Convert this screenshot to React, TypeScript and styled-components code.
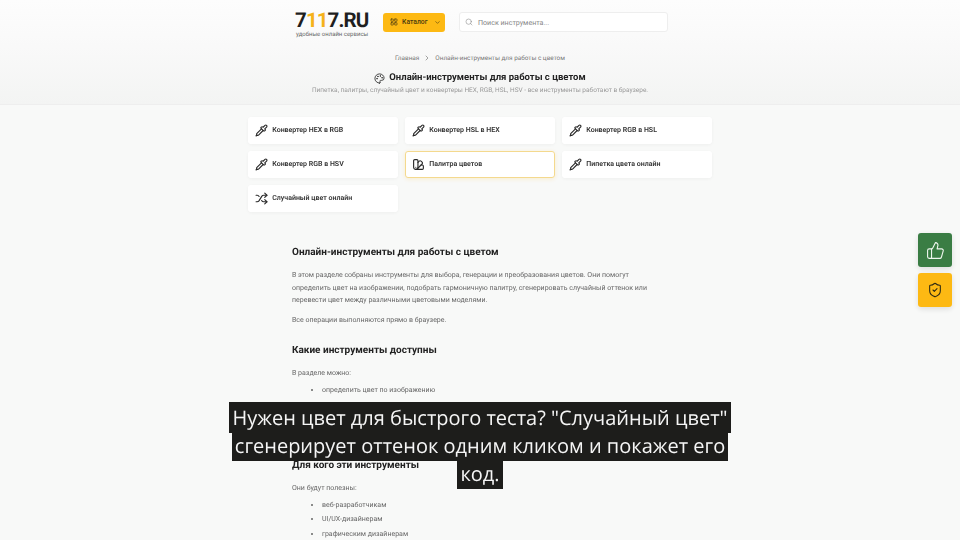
import React from 'react';
import styled, { createGlobalStyle } from 'styled-components';
import {
  ChevronDown,
  ChevronRight,
  LayoutGrid,
  Palette,
  Pipette,
  Search,
  ShieldCheck,
  Shuffle,
  SwatchBook,
  ThumbsUp,
} from 'lucide-react';

const GlobalStyle = createGlobalStyle`
  html, body {
    margin: 0;
    padding: 0;
    height: 540px;
    overflow: hidden;
    background: #f8f9f8;
    font-family: Roboto, "Liberation Sans", sans-serif;
    text-rendering: geometricPrecision;
  }
`;

const Page = styled.div`
  position: relative;
  width: 960px;
  height: 540px;
  overflow: hidden;
  opacity: 0.999;
`;

const TopArea = styled.div`
  background: linear-gradient(180deg, #fdfdfd 0%, #f9f9f9 45%, #f3f4f3 100%);
  border-bottom: 1px solid #eeeeee;
  box-sizing: border-box;
  height: 105px;
`;

const Header = styled.header`
  display: flex;
  align-items: center;
  height: 44px;
  padding-left: 295px;
`;

const Logo = styled.div`
  width: 88px;
  display: flex;
  flex-direction: column;
  padding-top: 5px;
`;

const LogoMark = styled.div`
  font-size: 20.5px;
  line-height: 20px;
  font-weight: 700;
  letter-spacing: -0.9px;
  color: #1f1f1f;

  span {
    color: #f5b21a;
  }
`;

const LogoTagline = styled.div`
  font-size: 6px;
  line-height: 7px;
  color: #666;
  padding-left: 1px;
  white-space: nowrap;
`;

const CatalogButton = styled.button`
  display: flex;
  align-items: center;
  gap: 4px;
  width: 62px;
  height: 19px;
  padding: 0 0 0 7px;
  border: 0;
  border-radius: 3px;
  background: #fdb913;
  color: #4a3a10;
  font-family: inherit;
  font-size: 6.8px;
  font-weight: 500;
`;

const SearchBox = styled.div`
  display: flex;
  align-items: center;
  gap: 5px;
  box-sizing: border-box;
  width: 209px;
  height: 20px;
  margin-left: 14px;
  padding-left: 5px;
  background: #fff;
  border: 1px solid #eeeeee;
  border-radius: 3px;
  color: #858585;
  font-size: 7.1px;
`;

const Breadcrumbs = styled.nav`
  display: flex;
  justify-content: center;
  align-items: center;
  gap: 4px;
  height: 21px;
  padding-top: 6px;
  box-sizing: border-box;
  font-size: 6.4px;
  color: #777;
`;

const Hero = styled.section`
  text-align: center;
`;

const HeroTitle = styled.h1`
  display: flex;
  justify-content: center;
  align-items: center;
  gap: 4px;
  margin: 0;
  padding-top: 6px;
  font-size: 9.5px;
  line-height: 14px;
  font-weight: 700;
  color: #222;
`;

const HeroText = styled.p`
  margin: 0;
  font-size: 6.5px;
  line-height: 11px;
  color: #999;
`;

const ToolGrid = styled.div`
  display: grid;
  grid-template-columns: repeat(3, 149.5px);
  grid-auto-rows: 27px;
  gap: 7px 7.5px;
  justify-content: center;
  padding-top: 12px;
`;

const ToolCard = styled.a<{ $active?: boolean }>`
  display: flex;
  align-items: center;
  gap: 4px;
  padding: 0 0 1px 6px;
  background: #fff;
  border: 1px solid ${(p) => (p.$active ? '#f4d98e' : 'transparent')};
  border-radius: 3px;
  box-shadow: ${(p) =>
    p.$active ? '0 1px 5px rgba(253, 185, 19, 0.18)' : '0 1px 4px rgba(0, 0, 0, 0.05)'};
  font-size: 7px;
  font-weight: 600;
  color: #333;
`;

const Article = styled.article`
  width: 360px;
  margin: 34px 0 0 292px;
  color: #666;
  font-size: 7px;
  line-height: 12.7px;
`;

const ArticleHeading = styled.h2`
  margin: 0 0 10px;
  font-size: 10px;
  line-height: 13px;
  font-weight: 700;
  color: #222;
`;

const Paragraph = styled.p`
  margin: 0 0 7px;
`;

const ListIntro = styled.p`
  margin: 0 0 4.5px;
`;

const ToolList = styled.ul`
  margin: 0;
  padding-left: 30px;

  li {
    margin-bottom: 1.6px;
  }
`;

const Section = styled.div<{ $gap: number }>`
  margin-top: ${(p) => p.$gap}px;
`;

const SideButtons = styled.div`
  position: absolute;
  top: 233px;
  left: 918px;
  display: flex;
  flex-direction: column;
  gap: 6px;
`;

const SideButton = styled.button<{ $color: string; $ink: string }>`
  display: flex;
  align-items: center;
  justify-content: center;
  width: 34px;
  height: 34px;
  padding: 0;
  border: 0;
  border-radius: 3px;
  background: ${(p) => p.$color};
  color: ${(p) => p.$ink};
  box-shadow: 0 2px 6px rgba(0, 0, 0, 0.12);
`;

const Caption = styled.div`
  position: absolute;
  left: 227px;
  top: 403.5px;
  width: 506px;
  text-align: center;
  font-family: "Open Sans", "Noto Sans", sans-serif;
  font-size: 20px;
  line-height: 28.2px;
  color: #f5f5f5;

  span {
    padding: 2px 3px;
    background: #1d1d1b;
    -webkit-box-decoration-break: clone;
    box-decoration-break: clone;
  }
`;

const tools = [
  { label: 'Конвертер HEX в RGB', Icon: Pipette },
  { label: 'Конвертер HSL в HEX', Icon: Pipette },
  { label: 'Конвертер RGB в HSL', Icon: Pipette },
  { label: 'Конвертер RGB в HSV', Icon: Pipette },
  { label: 'Палитра цветов', Icon: SwatchBook, active: true },
  { label: 'Пипетка цвета онлайн', Icon: Pipette },
  { label: 'Случайный цвет онлайн', Icon: Shuffle },
];

export default function App() {
  return (
    <Page>
      <GlobalStyle />
      <TopArea>
        <Header>
          <Logo>
            <LogoMark>
              7<span>11</span>7.RU
            </LogoMark>
            <LogoTagline>удобные онлайн сервисы</LogoTagline>
          </Logo>
          <CatalogButton>
            <LayoutGrid size={8} strokeWidth={2} />
            Каталог
            <ChevronDown size={7} strokeWidth={2} style={{ marginLeft: 2 }} />
          </CatalogButton>
          <SearchBox>
            <Search size={8} strokeWidth={1.6} />
            Поиск инструмента...
          </SearchBox>
        </Header>

        <Breadcrumbs>
          Главная
          <ChevronRight size={8} strokeWidth={2} />
          Онлайн-инструменты для работы с цветом
        </Breadcrumbs>

        <Hero>
          <HeroTitle>
            <Palette size={11} strokeWidth={1.8} />
            Онлайн-инструменты для работы с цветом
          </HeroTitle>
          <HeroText>
            Пипетка, палитры, случайный цвет и конвертеры HEX, RGB, HSL, HSV - все инструменты работают в браузере.
          </HeroText>
        </Hero>
      </TopArea>

      <ToolGrid>
        {tools.map(({ label, Icon, active }) => (
          <ToolCard key={label} $active={active}>
            <Icon size={13} strokeWidth={2.1} color="#2a2a2a" />
            {label}
          </ToolCard>
        ))}
      </ToolGrid>

      <Article>
        <ArticleHeading>Онлайн-инструменты для работы с цветом</ArticleHeading>
        <Paragraph>
          В этом разделе собраны инструменты для выбора, генерации и преобразования цветов. Они помогут определить цвет
          на изображении, подобрать гармоничную палитру, сгенерировать случайный оттенок или перевести цвет между
          различными цветовыми моделями.
        </Paragraph>
        <Paragraph>Все операции выполняются прямо в браузере.</Paragraph>

        <Section $gap={17}>
          <ArticleHeading>Какие инструменты доступны</ArticleHeading>
          <ListIntro>В разделе можно:</ListIntro>
          <ToolList>
            <li>определить цвет по изображению</li>
          </ToolList>
        </Section>

        <Section $gap={62}>
          <ArticleHeading>Для кого эти инструменты</ArticleHeading>
          <ListIntro>Они будут полезны:</ListIntro>
          <ToolList>
            <li>веб-разработчикам</li>
            <li>UI/UX-дизайнерам</li>
            <li>графическим дизайнерам</li>
          </ToolList>
        </Section>
      </Article>

      <SideButtons>
        <SideButton $color="#3a7d44" $ink="#eef6ee">
          <ThumbsUp size={19} strokeWidth={1.4} />
        </SideButton>
        <SideButton $color="#fdb913" $ink="#2d2a14">
          <ShieldCheck size={16} strokeWidth={1.6} />
        </SideButton>
      </SideButtons>

      <Caption>
        <span>Нужен цвет для быстрого теста? "Случайный цвет" сгенерирует оттенок одним кликом и покажет его код.</span>
      </Caption>
    </Page>
  );
}
